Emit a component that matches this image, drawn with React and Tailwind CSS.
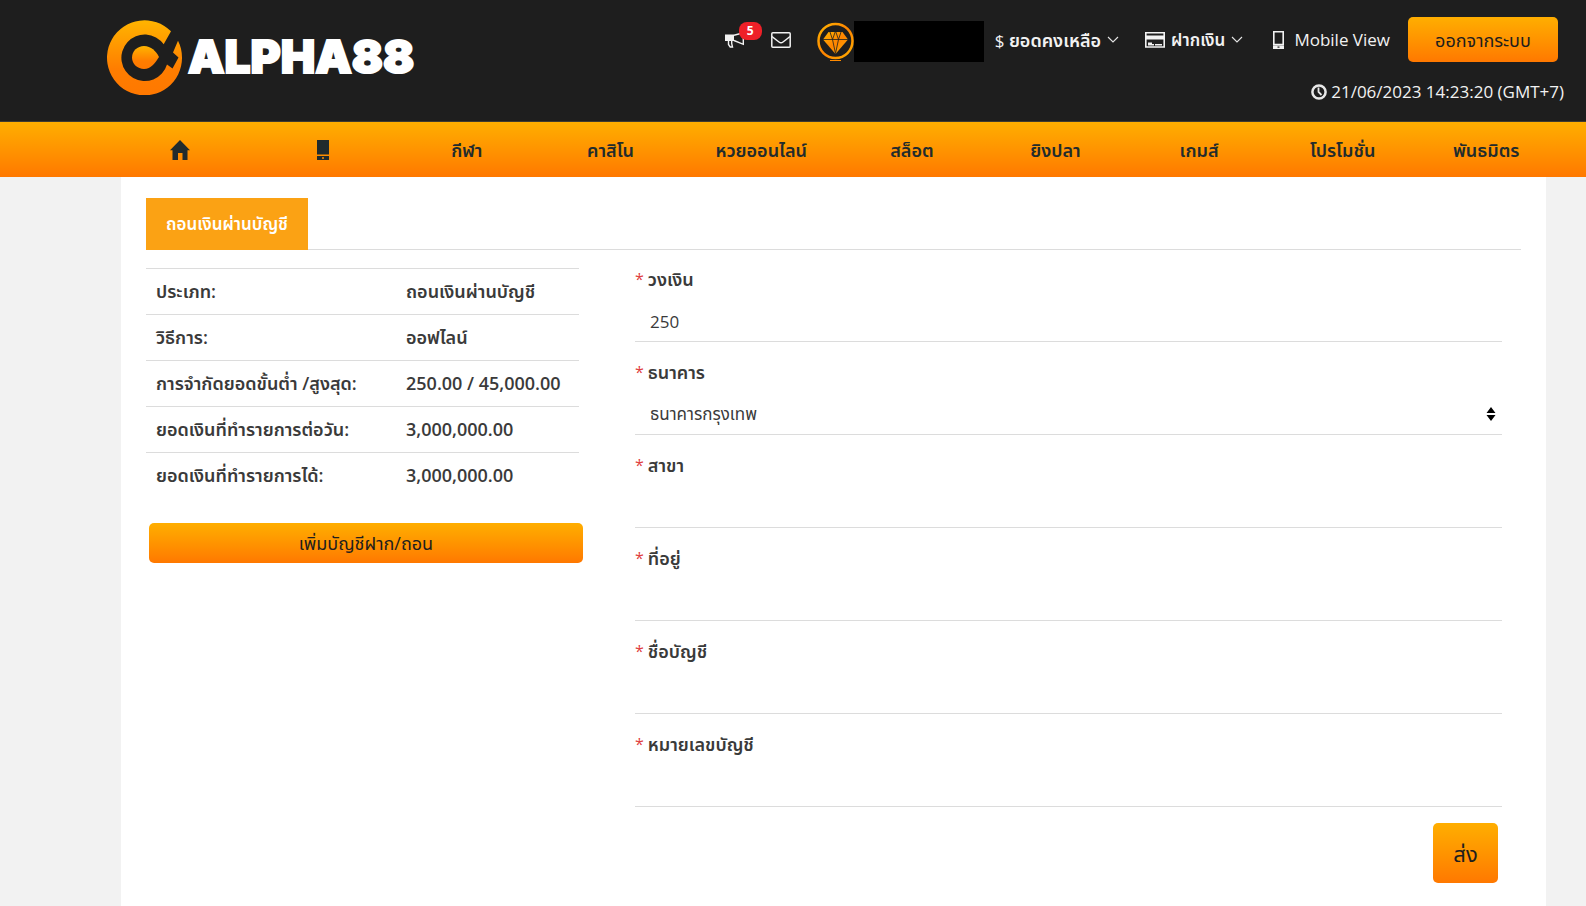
import React, { useState } from "react";

const LIMITS = [
    { label: "ประเภท:", value: "ถอนเงินผ่านบัญชี" },
    { label: "วิธีการ:", value: "ออฟไลน์" },
    { label: "การจำกัดยอดขั้นต่ำ /สูงสุด:", value: "250.00 / 45,000.00" },
    { label: "ยอดเงินที่ทำรายการต่อวัน:", value: "3,000,000.00" },
    { label: "ยอดเงินที่ทำรายการได้:", value: "3,000,000.00" },
];

const MENU = [
    { label: "กีฬา" },
    { label: "คาสิโน" },
    { label: "หวยออนไลน์", wide: true },
    { label: "สล็อต" },
    { label: "ยิงปลา" },
    { label: "เกมส์" },
    { label: "โปรโมชั่น" },
    { label: "พันธมิตร" },
];

const GRADIENT = "bg-gradient-to-b from-[#ffae00] to-[#ff7800]";

function Logo() {
    return (
        <a href="#" className="flex items-center gap-1.5" aria-label="ALPHA88">
            <svg width="75" height="75" viewBox="0 0 75 75">
                <defs>
                    <linearGradient id="ring" x1="0" y1="0" x2="0" y2="1">
                        <stop offset="0" stopColor="#ffb400" />
                        <stop offset="0.65" stopColor="#ff7d00" />
                        <stop offset="1" stopColor="#ff7800" />
                    </linearGradient>
                </defs>
                <path
                    fill="url(#ring)"
                    d="M64 11.3A37.5 37.5 0 1 0 75 37.5C75 31.5 73.7 26 71 20.8L66 32.5L71.5 37.5L65.5 48.5L60 44.5A23.3 23.3 0 1 1 56.7 24.3Z"
                />
                <path
                    fill="url(#ring)"
                    d="M25 37.5C25 31 30.5 26 37 26C44 26 49 31 52 37C48 43 44 49 37 49C30.5 49 25 44 25 37.5Z"
                />
            </svg>
            <span className="pb-1 font-['Inter',sans-serif] text-[46px] leading-none font-black text-white [-webkit-text-stroke:2px_white]">
                ALPHA88
            </span>
        </a>
    );
}

function MegaphoneIcon() {
    return (
        <svg width="20" height="16" viewBox="0 0 20 16">
            <path fill="#f2f2f2" d="M0 2.5h9v6.5H0z" />
            <path
                fill="none"
                stroke="#f2f2f2"
                strokeWidth="1.4"
                d="M9 3.2L18.3.8v11.5L9 8.5M3.5 9v3.5L5.2 15h2.3l-.8-3.5V9"
            />
        </svg>
    );
}

function MailIcon() {
    return (
        <svg width="20" height="16" viewBox="0 0 20 16">
            <g fill="none" stroke="#f2f2f2" strokeWidth="1.5">
                <rect x=".8" y=".8" width="18.4" height="14.4" rx="1" />
                <path d="M1 4.5C4 7 6 8.5 8 10q2 1.6 4 0c2-1.5 4-3 7-5.5" />
            </g>
        </svg>
    );
}

function DiamondBadge() {
    return (
        <svg width="37" height="39" viewBox="0 0 37 39">
            <defs>
                <linearGradient id="gem" x1="0" y1="0" x2="1" y2="1">
                    <stop offset="0" stopColor="#ffb400" />
                    <stop offset="0.5" stopColor="#ff8400" />
                    <stop offset="1" stopColor="#ffae00" />
                </linearGradient>
            </defs>
            <circle
                cx="18.5"
                cy="19"
                r="17"
                fill="none"
                stroke="url(#gem)"
                strokeWidth="2.5"
            />
            <path fill="url(#gem)" d="M11.5 10h14l5.5 7.5L18.5 32L6 17.5z" />
            <path
                fill="none"
                stroke="#1e1e1e"
                strokeWidth=".8"
                d="M5 17.5h27M13 10l2.5 7.5l3 14l3-14L24 10M18.5 9l-3 8.5M18.5 9l3 8.5"
            />
            <path stroke="#ff8a00" strokeWidth="1" d="M13 38.5h11" />
        </svg>
    );
}

function ChevronIcon() {
    return (
        <svg width="12" height="7" viewBox="0 0 12 7">
            <path
                d="M1 1l5 5l5-5"
                fill="none"
                stroke="#e5e5e5"
                strokeWidth="1.1"
            />
        </svg>
    );
}

function CardIcon() {
    return (
        <svg width="20" height="16" viewBox="0 0 20 16">
            <path
                fill="none"
                stroke="#f2f2f2"
                strokeWidth="1.6"
                d="M.8.8h18.4v14.2H.8z"
            />
            <path
                fill="#f2f2f2"
                d="M1 3.5h18v4H1zM3 10.5h4V12H3zM3 12h6v1.5H3zM10 12h7v1.5h-7z"
            />
        </svg>
    );
}

function PhoneOutlineIcon() {
    return (
        <svg width="11" height="18" viewBox="0 0 11 18">
            <path
                fill="none"
                stroke="#f2f2f2"
                strokeWidth="1.6"
                d="M.8.8h9.4v12.8H.8z"
            />
            <path fill="#f2f2f2" d="M0 14.5h11V18H0z" />
            <path fill="#1e1e1e" d="M4.5 15.5h2v1.2h-2z" />
        </svg>
    );
}

function ClockIcon() {
    return (
        <svg width="16" height="16" viewBox="0 0 16 16">
            <circle
                cx="8"
                cy="8"
                r="6.6"
                fill="none"
                stroke="#e8e8e8"
                strokeWidth="2.5"
            />
            <path
                d="M7.5 3.5V8l3 3"
                fill="none"
                stroke="#e8e8e8"
                strokeWidth="1.8"
            />
        </svg>
    );
}

function HomeIcon() {
    return (
        <svg width="20" height="20" viewBox="0 0 20 20">
            <path
                fill="#212b2d"
                d="M10 0L20 10.3H17.5V20H12.5V13H8V20H2.5V10.3H0z"
            />
        </svg>
    );
}

function PhoneIcon() {
    return (
        <svg width="12" height="20" viewBox="0 0 12 20">
            <path fill="#212b2d" d="M0 0h12v14.5H0zM0 16h12v4H0z" />
            <path fill="#ff8c00" d="M5 17.2h2v1.5H5z" />
        </svg>
    );
}

function SortIcon() {
    return (
        <svg
            width="10"
            height="14"
            viewBox="0 0 10 14"
            className="pointer-events-none absolute top-3 right-1.5"
        >
            <path fill="#000" d="M5 0l4.5 6h-9zM.5 8h9L5 14z" />
        </svg>
    );
}

function Field({ id, label, children }) {
    return (
        <div className="h-[93px] text-lg last-of-type:h-[90px]">
            <label
                htmlFor={id}
                className="flex h-[22px] items-center gap-1 font-semibold"
            >
                <span className="text-base font-normal text-[#e04040]">*</span>
                {label}
            </label>
            <div className="relative mt-3">{children}</div>
        </div>
    );
}

const INPUT =
    "block h-10 w-full appearance-none rounded-none border-b border-[#dcdcdc] bg-transparent px-[15px] text-[17px] outline-none";

export default function App() {
    const [amount, setAmount] = useState("250");
    const [bank, setBank] = useState("bbl");
    const [branch, setBranch] = useState("");
    const [address, setAddress] = useState("");
    const [accountName, setAccountName] = useState("");
    const [accountNumber, setAccountNumber] = useState("");

    return (
        <div className="flex min-h-screen flex-col bg-[#f2f2f2] font-['Open_Sans','Noto_Sans_Thai','Noto_Sans',sans-serif] text-[17px] leading-6 text-[#3a3a3a]">
            <header className="flex h-[122px] justify-between border-b border-[#3f3a30] bg-[#1e1e1e] pl-[107px] text-[#f2f2f2]">
                <div className="pt-5">
                    <Logo />
                </div>

                <div className="flex flex-col items-end">
                    <div className="flex items-center pt-[17px] pr-7">
                        <button className="relative mr-[26px]" aria-label="5">
                            <MegaphoneIcon />
                            <span className="absolute -top-2.5 left-3.5 flex h-[18px] w-[23px] items-center justify-center rounded-lg bg-[#ee2028] text-xs font-bold text-white">
                                5
                            </span>
                        </button>
                        <button className="mr-[26px]">
                            <MailIcon />
                        </button>
                        <div className="mt-1 mr-[11px] flex items-center">
                            <DiamondBadge />
                            <div className="h-[41px] w-[130px] bg-black" />
                        </div>
                        <button className="mr-[26px] flex items-center gap-1.5 whitespace-nowrap">
                            <span>
                                ${" "}
                                <span className="text-lg font-semibold">
                                    ยอดคงเหลือ
                                </span>
                            </span>
                            <ChevronIcon />
                        </button>
                        <button className="mr-[30px] flex items-center gap-1.5 whitespace-nowrap font-semibold">
                            <CardIcon />
                            ฝากเงิน
                            <ChevronIcon />
                        </button>
                        <a
                            href="#"
                            className="mr-[18px] flex items-center gap-2.5 whitespace-nowrap"
                        >
                            <PhoneOutlineIcon />
                            Mobile View
                        </a>
                        <button
                            className={`h-[45px] w-[150px] rounded-[5px] text-lg text-[#1e1e1e] ${GRADIENT}`}
                        >
                            ออกจากระบบ
                        </button>
                    </div>

                    <div className="flex items-center gap-1 pt-[18px] pr-[22px]">
                        <ClockIcon />
                        21/06/2023 14:23:20 (GMT+7)
                    </div>
                </div>
            </header>

            <nav
                className={`flex h-[55px] items-center pr-7 pl-[108px] text-lg font-semibold text-[#212b2d] ${GRADIENT}`}
            >
                <a href="#" className="flex flex-1 justify-center">
                    <HomeIcon />
                </a>
                <a href="#" className="flex flex-1 justify-center">
                    <PhoneIcon />
                </a>
                {MENU.map((item) => (
                    <a
                        key={item.label}
                        href="#"
                        className={
                            item.wide
                                ? "flex-[1.1] text-center"
                                : "flex-1 text-center"
                        }
                    >
                        {item.label}
                    </a>
                ))}
            </nav>

            <main className="mr-10 ml-[121px] grow bg-white px-[25px] pt-[21px] pb-5">
                <div className="flex border-b border-[#dcdcdc]">
                    <button className="-mb-px h-[52px] w-[162px] bg-[#fba214] font-semibold whitespace-nowrap text-white">
                        ถอนเงินผ่านบัญชี
                    </button>
                </div>

                <div className="flex gap-[52px] pt-[18px] pr-[19px]">
                    <div className="w-[437px] shrink-0">
                        <table className="w-[433px] table-fixed text-left text-lg font-semibold">
                            <tbody>
                                {LIMITS.map((row) => (
                                    <tr
                                        key={row.label}
                                        className="h-[46px] border-t border-[#dcdcdc]"
                                    >
                                        <th
                                            scope="row"
                                            className="w-[250px] pb-0.5 pl-2.5 font-semibold whitespace-nowrap"
                                        >
                                            {row.label}
                                        </th>
                                        <td className="pb-0.5 pl-2.5 whitespace-nowrap">
                                            {row.value}
                                        </td>
                                    </tr>
                                ))}
                            </tbody>
                        </table>

                        <button
                            className={`mt-6 ml-[3px] h-10 w-[434px] rounded-[5px] text-lg text-[#1e1e1e] ${GRADIENT}`}
                        >
                            เพิ่มบัญชีฝาก/ถอน
                        </button>
                    </div>

                    <form
                        className="min-w-0 grow"
                        onSubmit={(e) => e.preventDefault()}
                    >
                        <section>
                            <Field id="amount" label="วงเงิน">
                                <input
                                    id="amount"
                                    type="text"
                                    value={amount}
                                    onChange={(e) => setAmount(e.target.value)}
                                    className={INPUT}
                                />
                            </Field>
                            <Field id="bank" label="ธนาคาร">
                                <select
                                    id="bank"
                                    value={bank}
                                    onChange={(e) => setBank(e.target.value)}
                                    className={INPUT}
                                >
                                    <option value="bbl">ธนาคารกรุงเทพ</option>
                                </select>
                                <SortIcon />
                            </Field>
                            <Field id="branch" label="สาขา">
                                <input
                                    id="branch"
                                    type="text"
                                    value={branch}
                                    onChange={(e) => setBranch(e.target.value)}
                                    className={INPUT}
                                />
                            </Field>
                            <Field id="address" label="ที่อยู่">
                                <input
                                    id="address"
                                    type="text"
                                    value={address}
                                    onChange={(e) => setAddress(e.target.value)}
                                    className={INPUT}
                                />
                            </Field>
                            <Field id="accountName" label="ชื่อบัญชี">
                                <input
                                    id="accountName"
                                    type="text"
                                    value={accountName}
                                    onChange={(e) =>
                                        setAccountName(e.target.value)
                                    }
                                    className={INPUT}
                                />
                            </Field>
                            <Field id="accountNumber" label="หมายเลขบัญชี">
                                <input
                                    id="accountNumber"
                                    type="text"
                                    value={accountNumber}
                                    onChange={(e) =>
                                        setAccountNumber(e.target.value)
                                    }
                                    className={INPUT}
                                />
                            </Field>
                        </section>

                        <div className="flex justify-end pr-1">
                            <button
                                type="submit"
                                className={`h-[60px] w-[65px] rounded-[5px] text-[22px] text-[#1e1e1e] ${GRADIENT}`}
                            >
                                ส่ง
                            </button>
                        </div>
                    </form>
                </div>
            </main>
        </div>
    );
}
